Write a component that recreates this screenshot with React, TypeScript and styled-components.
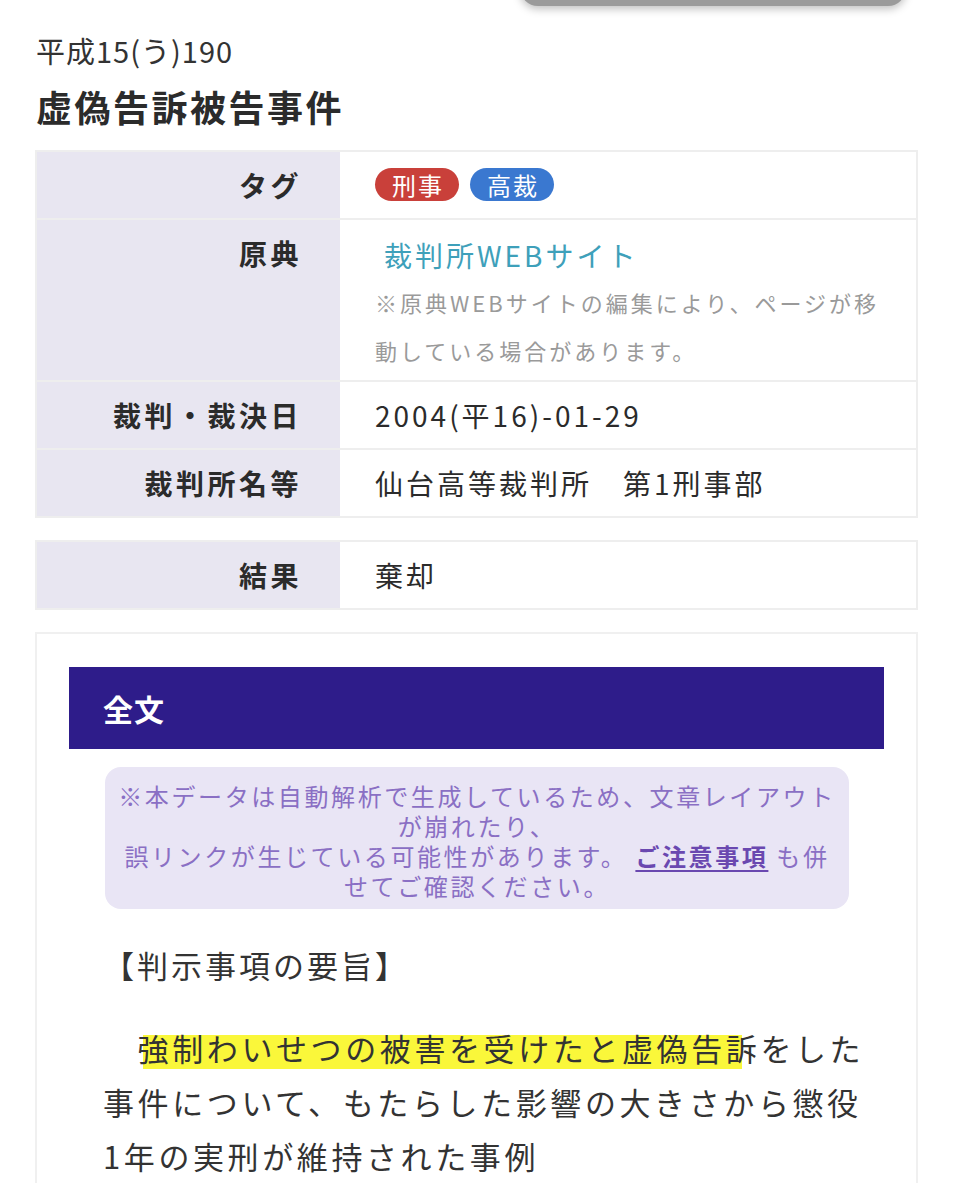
import React from "react"
import styled, { createGlobalStyle } from "styled-components"

const GlobalStyle = createGlobalStyle`
    html, body {
        margin: 0;
        padding: 0;
        background: #ffffff;
    }
    body {
        font-family: "Noto Sans CJK JP", "Noto Sans", sans-serif;
        color: #2b2b2b;
    }
`

const Page = styled.div`
    position: relative;
    width: 954px;
    padding: 28px 36px 0 35px;
    box-sizing: border-box;
`

const FloatingBar = styled.div`
    position: absolute;
    top: -40px;
    left: 520px;
    width: 386px;
    height: 46px;
    background: #9b9b9b;
    border-radius: 0 0 18px 18px;
    box-shadow: 0 3px 8px rgba(0, 0, 0, 0.25);
`

const CaseNumber = styled.div`
    font-size: 29px;
    line-height: 44px;
    letter-spacing: 1px;
    color: #333;
    margin-left: 1px;
`

const CaseTitle = styled.h1`
    margin: 10px 0 20px 1px;
    font-size: 36px;
    font-weight: 700;
    line-height: 48px;
    letter-spacing: 2.5px;
    color: #2b2b2b;
`

const Table = styled.div`
    border: 2px solid #eeeeee;
    border-bottom: none;
    margin-bottom: 22px;
`

const Row = styled.div`
    display: grid;
    grid-template-columns: 303px 1fr;
    border-bottom: 2px solid #eeeeee;
`

const Label = styled.div`
    background: #e8e6f1;
    display: flex;
    justify-content: flex-end;
    align-items: flex-start;
    padding: 14px 38px 0 0;
    min-height: 52px;
    font-size: 28px;
    font-weight: 700;
    line-height: 38px;
    letter-spacing: 3.5px;
    color: #2b2b2b;
`

const Value = styled.div`
    background: #fff;
    padding: 14px 20px 0 35px;
    min-height: 52px;
    font-size: 28px;
    letter-spacing: 3px;
    line-height: 38px;
    color: #2b2b2b;
`

const TagList = styled.div`
    display: flex;
    gap: 11px;
    padding-top: 2px;
`

const Tag = styled.span<{ color: string }>`
    display: inline-flex;
    align-items: center;
    justify-content: center;
    height: 33px;
    padding: 0 15px 0 17px;
    border-radius: 17px;
    background: ${({ color }) => color};
    color: #fff;
    font-size: 24px;
    letter-spacing: 2px;
`

const SourceLink = styled.a`
    display: block;
    margin-left: 9px;
    color: #3ea0ba;
    text-decoration: none;
    font-size: 28px;
    letter-spacing: 3px;
    line-height: 42px;
`

const SourceNote = styled.p`
    margin: 2px 0 6px;
    color: #9a9a9a;
    font-size: 22px;
    line-height: 48px;
    letter-spacing: 3px;
`

const Card = styled.section`
    border: 2px solid #f0f0f0;
    border-bottom: none;
    padding: 33px 32px 0;
`

const SectionHeader = styled.h2`
    margin: 0;
    background: #2e1c8a;
    color: #fff;
    height: 82px;
    display: flex;
    align-items: center;
    padding-left: 34px;
    font-size: 30px;
    font-weight: 700;
    letter-spacing: 1px;
`

const Notice = styled.div`
    margin: 18px 35px 0 36px;
    background: #e9e5f5;
    border-radius: 16px;
    padding: 14px 10px 8px;
    text-align: center;
    color: #8a6fc4;
    font-size: 24px;
    line-height: 30px;
    letter-spacing: 2.6px;
`

const NoticeLink = styled.a`
    color: #6a48b0;
    font-weight: 700;
    text-decoration: underline;
    text-underline-offset: 4px;
`

const Body = styled.div`
    padding: 30px 0 0 34px;
    color: #333;
`

const Heading = styled.p`
    margin: 0 0 30px;
    font-size: 31px;
    line-height: 52px;
    letter-spacing: 3px;
`

const Paragraph = styled.p`
    margin: 0;
    font-size: 31px;
    line-height: 54px;
    letter-spacing: 3.6px;
`

const Highlight = styled.span`
    background-image: linear-gradient(
        to right,
        transparent 5px,
        #faf73a 5px,
        #faf73a calc(100% - 18px),
        transparent calc(100% - 18px)
    );
    background-size: 100% 34px;
    background-position: 0 95%;
    background-repeat: no-repeat;
`

const App = (): JSX.Element => (
    <Page>
        <GlobalStyle />
        <FloatingBar />
        <CaseNumber>平成15(う)190</CaseNumber>
        <CaseTitle>虚偽告訴被告事件</CaseTitle>

        <Table>
            <Row>
                <Label>タグ</Label>
                <Value>
                    <TagList>
                        <Tag color="#c9403a">刑事</Tag>
                        <Tag color="#3a78d0">高裁</Tag>
                    </TagList>
                </Value>
            </Row>
            <Row>
                <Label>原典</Label>
                <Value>
                    <SourceLink href="#">裁判所WEBサイト</SourceLink>
                    <SourceNote>
                        ※原典WEBサイトの編集により、ページが移動している場合があります。
                    </SourceNote>
                </Value>
            </Row>
            <Row>
                <Label>裁判・裁決日</Label>
                <Value>2004(平16)-01-29</Value>
            </Row>
            <Row>
                <Label>裁判所名等</Label>
                <Value>仙台高等裁判所　第1刑事部</Value>
            </Row>
        </Table>

        <Table>
            <Row>
                <Label>結果</Label>
                <Value>棄却</Value>
            </Row>
        </Table>

        <Card>
            <SectionHeader>全文</SectionHeader>
            <Notice>
                ※本データは自動解析で生成しているため、文章レイアウトが崩れたり、
                <br />
                誤リンクが生じている可能性があります。 <NoticeLink href="#">ご注意事項</NoticeLink> も併せてご確認ください。
            </Notice>
            <Body>
                <Heading>【判示事項の要旨】</Heading>
                <Paragraph>
                    {"\u3000"}
                    <Highlight>強制わいせつの被害を受けたと虚偽告訴</Highlight>をした
                    <br />
                    事件について、もたらした影響の大きさから懲役
                    <br />
                    1年の実刑が維持された事例
                </Paragraph>
            </Body>
        </Card>
    </Page>
)

export default App
